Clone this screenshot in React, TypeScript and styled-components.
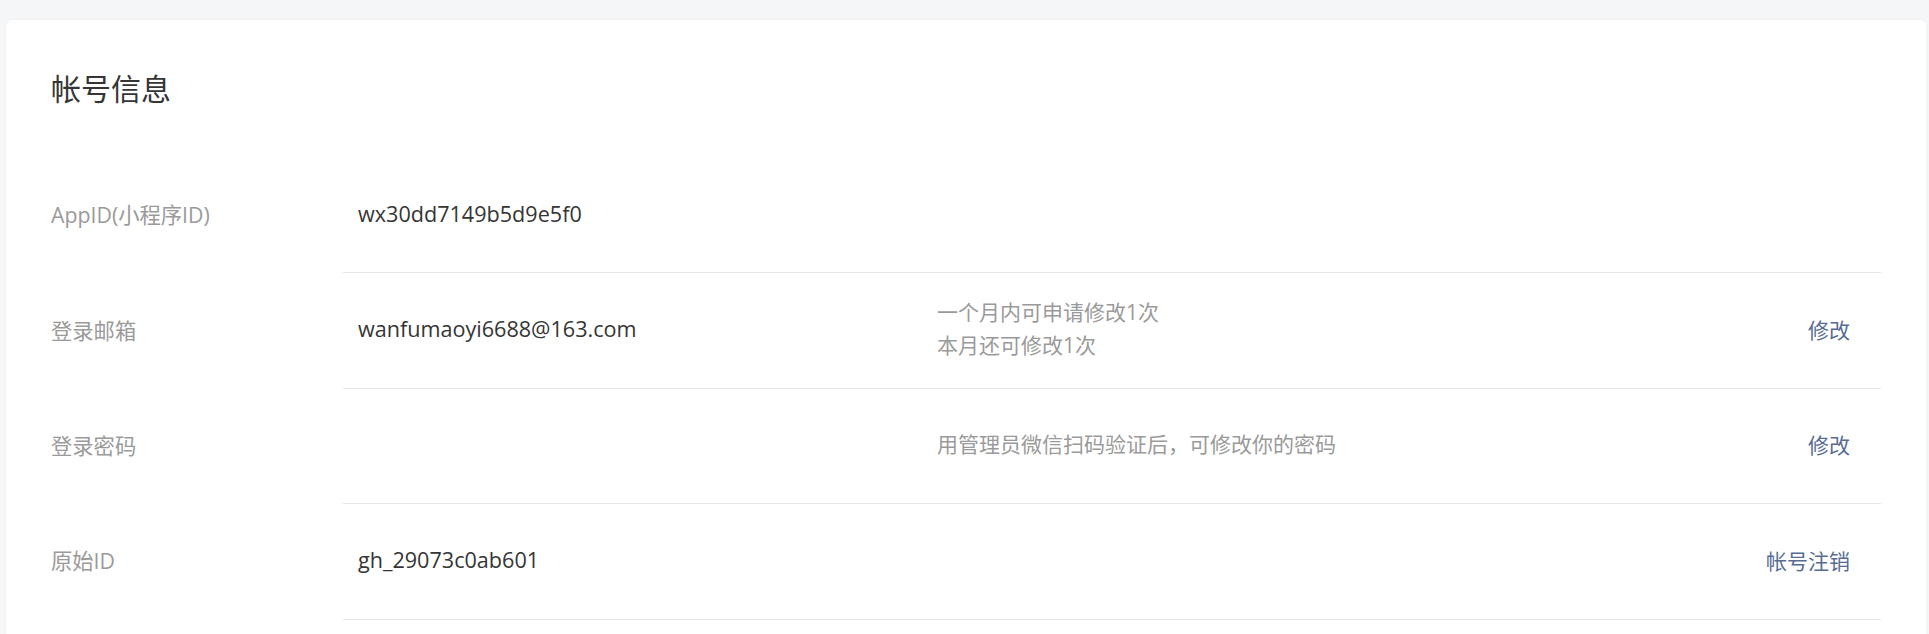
import React from "react";
import styled, { createGlobalStyle } from "styled-components";

const GlobalStyle = createGlobalStyle`
  html, body {
    margin: 0;
    padding: 0;
    background: #f5f6f8;
  }
  body {
    font-family: "Open Sans", "Noto Sans CJK SC", sans-serif;
  }
  * { box-sizing: border-box; }
`;

const Page = styled.div`
  padding: 20px 3px 0 6px;
  height: 634px;
  overflow: hidden;
`;

const Card = styled.section`
  background: #ffffff;
  border-radius: 6px;
  box-shadow: 0 0 3px rgba(0, 0, 0, 0.04);
  padding: 0 45px 40px;
`;

const Title = styled.h2`
  margin: 0;
  height: 138px;
  display: flex;
  align-items: center;
  padding-bottom: 4px;
  font-size: 30px;
  font-weight: 400;
  color: #353535;
  font-family: "Noto Sans CJK SC", sans-serif;
`;

const Row = styled.div`
  display: flex;
  height: 115.4px;
`;

const Label = styled.div`
  width: 292px;
  flex-shrink: 0;
  display: flex;
  align-items: center;
  padding-bottom: 4px;
  font-size: 21.3px;
  color: #9a9a9a;
`;

const Body = styled.div`
  flex: 1;
  display: flex;
  align-items: center;
  padding-bottom: 3px;
  border-bottom: 1px solid #e7e7eb;
`;

const Value = styled.div`
  width: 594px;
  flex-shrink: 0;
  padding-left: 15px;
  padding-bottom: 1px;
  font-size: 21.6px;
  color: #353535;
`;

const Hint = styled.div`
  flex: 1;
  font-size: 21px;
  line-height: 33px;
  color: #9a9a9a;
`;

const Action = styled.a`
  padding-right: 31px;
  font-size: 21px;
  color: #576b95;
  text-decoration: none;
  cursor: pointer;
`;

type Item = {
  label: string;
  value?: string;
  hint?: string[];
  action?: string;
};

const items: Item[] = [
  { label: "AppID(小程序ID)", value: "wx30dd7149b5d9e5f0" },
  {
    label: "登录邮箱",
    value: "wanfumaoyi6688@163.com",
    hint: ["一个月内可申请修改1次", "本月还可修改1次"],
    action: "修改",
  },
  {
    label: "登录密码",
    hint: ["用管理员微信扫码验证后，可修改你的密码"],
    action: "修改",
  },
  { label: "原始ID", value: "gh_29073c0ab601", action: "帐号注销" },
];

export default function App() {
  return (
    <>
      <GlobalStyle />
      <Page>
        <Card>
          <Title>帐号信息</Title>
          {items.map((it) => (
            <Row key={it.label}>
              <Label>{it.label}</Label>
              <Body>
                <Value>{it.value}</Value>
                <Hint>
                  {it.hint?.map((h) => (
                    <div key={h}>{h}</div>
                  ))}
                </Hint>
                {it.action && <Action>{it.action}</Action>}
              </Body>
            </Row>
          ))}
        </Card>
      </Page>
    </>
  );
}
